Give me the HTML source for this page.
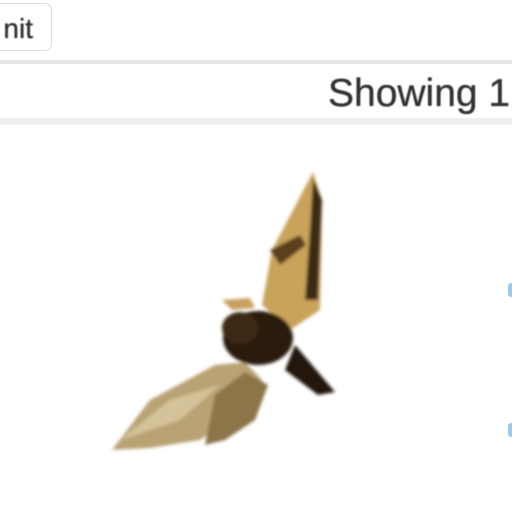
<!DOCTYPE html>
<html><head><style>
body{margin:0;width:512px;height:512px;background:#fff;overflow:hidden;position:relative;font-family:"Liberation Sans",sans-serif}
.btn{position:absolute;left:-60px;top:3px;width:112px;height:48px;border:1.5px solid #dcdcdc;border-radius:7px;box-sizing:border-box;background:#fff}
.btn span{position:absolute;right:18px;top:9px;font-size:28px;color:#333;filter:blur(0.6px);text-shadow:0 0 1px #333}
.l1{position:absolute;left:0;top:60px;width:512px;height:4px;background:#e6e6e6}
.l2{position:absolute;left:0;top:118px;width:512px;height:7px;background:#eeeeee}
.show{position:absolute;left:328px;top:72px;font-size:39px;color:#333;white-space:nowrap;filter:blur(0.6px);text-shadow:0 0 1px #333}
.blue{position:absolute;left:508px;width:6px;height:14px;background:#9cc8ea;border-radius:3px}
</style></head><body>
<div class="btn"><span>nit</span></div>
<div class="l1"></div>
<div class="show">Showing 1</div>
<div class="l2"></div>
<div class="blue" style="top:283px"></div>
<div class="blue" style="top:423px"></div>
<svg width="512" height="512" style="position:absolute;left:0;top:0">
<defs><filter id="b"><feGaussianBlur stdDeviation="1.5"/></filter></defs>
<g filter="url(#b)">
<polygon points="313,172 322,200 320,310 290,330 262,305 272,250" fill="#c9a35a"/>
<polygon points="313,178 322,200 318,300 305,300 310,230" fill="#3a2a15"/>
<polygon points="270,250 300,235 306,245 280,265" fill="#5a3f1c"/>
<polygon points="112,450 150,400 215,365 245,362 262,380 245,410 200,440 150,448" fill="#b9a374"/>
<polygon points="205,445 215,395 245,372 268,385 255,420 225,440" fill="#8b744a"/>
<polygon points="120,440 170,400 220,385 180,420" fill="#d4c29a"/>
<polygon points="295,345 335,392 318,395 285,370" fill="#241810"/>
<ellipse cx="258" cy="338" rx="35" ry="27" fill="#2c1c0e"/>
<ellipse cx="240" cy="328" rx="18" ry="16" fill="#3d2a12"/>
<polygon points="222,300 250,298 255,308 232,310" fill="#c8a060"/>
</g>
</svg>
</body></html>
